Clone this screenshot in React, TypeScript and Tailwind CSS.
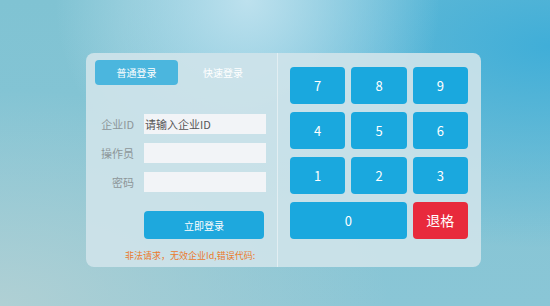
import React from "react";

const keys = ["7", "8", "9", "4", "5", "6", "1", "2", "3"];

const Field = ({ label, placeholder }: { label: string; placeholder?: string }) => (
  <div className="flex items-center">
    <span className="w-[48px] text-right text-[11px] leading-none text-[#8d9699]">{label}</span>
    <div className="ml-[10px] flex h-[20px] w-[122px] items-center bg-[#f2f4f7] px-[1px]">
      {placeholder && <span className="text-[11px] leading-none text-[#555]">{placeholder}</span>}
    </div>
  </div>
);

const App = () => {
  return (
    <div
      className="h-[306px] w-[550px] overflow-hidden bg-[#86c4d5] bg-[radial-gradient(ellipse_at_45%_0%,#bde1ee_0%,rgba(189,225,238,0)_45%),radial-gradient(ellipse_at_100%_15%,#40aed8_0%,rgba(64,174,216,0)_55%),radial-gradient(ellipse_at_0%_100%,#b0d0d4_0%,rgba(176,208,212,0)_50%),linear-gradient(180deg,#80c3d3_0%,#8ac6d6_100%)] pl-[86px] pt-[53px]"
      style={{ fontFamily: '"Noto Sans CJK SC", "Open Sans", sans-serif' }}
    >
      <div className="flex h-[214px] w-[395px] rounded-[8px] bg-[#cfe3ea]/90">
        {/* left: login form */}
        <div className="flex w-[192px] flex-col border-r border-[#e2eef2] pt-[7px]">
          <div className="flex pl-[9px]">
            <div className="flex h-[25px] w-[83px] items-center justify-center rounded-[4px] bg-[#4bb6de] text-[10px] text-white">
              普通登录
            </div>
            <div className="flex h-[25px] w-[90px] items-center justify-center text-[10px] text-white">快速登录</div>
          </div>

          <div className="mt-[29px] flex flex-col gap-[9px]">
            <Field label="企业ID" placeholder="请输入企业ID" />
            <Field label="操作员" />
            <Field label="密码" />
          </div>

          <button className="ml-[58px] mt-[19px] flex h-[28px] w-[120px] items-center justify-center rounded-[4px] bg-[#1ea8dd] text-[10px] text-white">
            立即登录
          </button>

          <p className="ml-[39px] mt-[12px] text-[9px] leading-none text-[#ea7a2c]">非法请求，无效企业Id,错误代码:</p>
        </div>

        {/* right: keypad */}
        <div className="grid w-[190px] grid-cols-3 content-start gap-x-[6px] gap-y-[8px] pl-[12px] pt-[14px]">
          {keys.map((k) => (
            <button
              key={k}
              className="flex h-[37px] items-center justify-center rounded-[4px] bg-[#1aa8de] text-[13px] text-white"
            >
              {k}
            </button>
          ))}
          <button className="col-span-2 flex h-[37px] items-center justify-center rounded-[4px] bg-[#1aa8de] text-[13px] text-white">
            0
          </button>
          <button className="flex h-[37px] items-center justify-center rounded-[4px] bg-[#e82a3c] text-[14px] text-white">
            退格
          </button>
        </div>
      </div>
    </div>
  );
};

export default App;
